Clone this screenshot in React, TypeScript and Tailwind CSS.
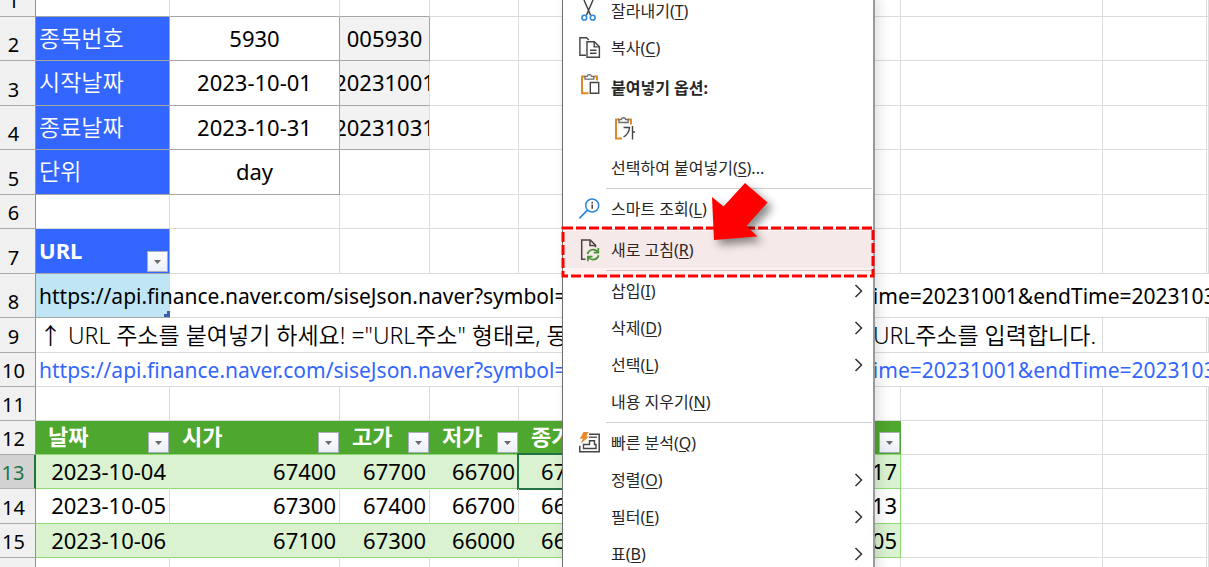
import type { ReactNode } from 'react'
import clsx from 'clsx'

const API_URL =
  'https://api.finance.naver.com/siseJson.naver?symbol=005930&requestType=1&startTime=20231001&endTime=20231031&timeframe=day'

const CONDITIONS = [
  { row: 2, label: '종목번호', value: '5930', code: '005930', height: 'h-11' },
  { row: 3, label: '시작날짜', value: '2023-10-01', code: '20231001', height: 'h-[45px]' },
  { row: 4, label: '종료날짜', value: '2023-10-31', code: '20231031', height: 'h-11' },
  { row: 5, label: '단위', value: 'day', code: '', height: 'h-[45px]' },
]

const COLUMNS = ['날짜', '시가', '고가', '저가', '종가', '거래량', '소진율']

const PRICES = [
  { row: 13, height: 'h-[34px]', values: ['2023-10-04', '67400', '67700', '66700', '67500', '17123847', '53.17'] },
  { row: 14, height: 'h-[35px]', values: ['2023-10-05', '67300', '67400', '66700', '66700', '11743288', '53.13'] },
  { row: 15, height: 'h-[34px]', values: ['2023-10-06', '67100', '67300', '66000', '66000', '13394815', '53.05'] },
]

const CutIcon = () => (
  <svg width="22" height="24" viewBox="0 0 22 24" fill="none">
    <path d="M5 1l6.600 15.200M14 1L7.400 16.200" stroke="#444" strokeWidth="1.5" />
    <circle cx="5.300" cy="18.700" r="2.400" stroke="#2b88d8" strokeWidth="1.5" />
    <circle cx="13.700" cy="18.700" r="2.400" stroke="#2b88d8" strokeWidth="1.5" />
  </svg>
)

const CopyIcon = () => (
  <svg width="22" height="24" viewBox="0 0 22 24" fill="none" stroke="#444" strokeWidth="1.4">
    <path d="M7 19.300H.9V1.700h6.600l2.400 2.200" fill="#fafafa" />
    <path d="M8 5.700h7.400l5 5v10.600H8z" fill="#fff" />
    <path d="M15.200 5.900v5h5M11 14.200h6.500M11 17.200h6.500" />
  </svg>
)

const PasteIcon = () => (
  <svg width="22" height="24" viewBox="0 0 22 24" fill="none">
    <path d="M9.500 21.200H3V4.400h3M15 4.400h3v4" stroke="#e08a27" strokeWidth="2" />
    <path d="M6 7.200V4.400h2.200a2.200 2.200 0 0 1 4.300 0h2.200v2.800z" stroke="#6b6b6b" strokeWidth="1.3" fill="#fff" />
    <path d="M11.300 10.500h8.400v10.700h-8.400z" stroke="#444" strokeWidth="1.4" fill="#fff" />
  </svg>
)

const PasteTextIcon = () => (
  <svg width="24" height="26" viewBox="0 0 24 26" fill="none">
    <path d="M11 23.500H5V4.500h3M17 4.500h3v5" stroke="#e08a27" strokeWidth="2" />
    <path d="M8 7.500V4.500h2.400a2.200 2.200 0 0 1 4.300 0h2.400v3z" stroke="#6b6b6b" strokeWidth="1.3" fill="#fff" />
    <path d="M12.500 12.500h6c-.3 4.500-2.500 7.500-6 9.500M21.500 11v13.500M21.500 17h2.500" stroke="#444" strokeWidth="1.4" />
  </svg>
)

const LookupIcon = () => (
  <svg width="22" height="24" viewBox="0 0 22 24" fill="none">
    <circle cx="13.200" cy="8.500" r="6.500" stroke="#2b88d8" strokeWidth="1.500" fill="#fff" />
    <path d="M8.500 13.200L.3 21.400" stroke="#2b88d8" strokeWidth="1.700" />
    <path d="M13.200 7.600v4.200M13.200 4.800v1.600" stroke="#444" strokeWidth="1.500" />
  </svg>
)

const RefreshIcon = () => (
  <svg width="22" height="24" viewBox="0 0 22 24" fill="none">
    <path d="M6.500 21.300H2.700V2h8.600l5.200 5.200v2" stroke="#444" strokeWidth="1.500" />
    <path d="M11 2.200v5.400h5.400" stroke="#444" strokeWidth="1.500" />
    <path
      d="M8.600 16c1-4.500 6.500-6 10-2.300M19.300 10v4.600h-4.600M19.600 17.200c-1 4.500-6.500 6-10 2.300M8.900 23.200v-4.600h4.600"
      stroke="#3f9b3c"
      strokeWidth="1.700"
    />
  </svg>
)

const AnalysisIcon = () => (
  <svg width="22" height="24" viewBox="0 0 22 24" fill="none">
    <path d="M10 3.200h10.200v17.600H.8v-6" stroke="#444" strokeWidth="1.500" />
    <path d="M10 6.200h8" stroke="#444" strokeWidth="1.300" />
    <path d="M4.500 17.500v-4h6V9.800h5v3.700H17v4z" stroke="#444" strokeWidth="1.400" />
    <path d="M4.500 1h5L7.200 5.500H10L1.500 13 4 7.700H.8z" fill="#e8892b" />
  </svg>
)

const ChevronIcon = () => (
  <svg width="9" height="14" viewBox="0 0 9 14" fill="none">
    <path d="M1.500 1l6 6-6 6" stroke="#333" strokeWidth="1.500" />
  </svg>
)

function RowHead({ n, active }: { n: number; active?: boolean }) {
  return (
    <th
      scope="row"
      className={clsx(
        'border-b p-0 pr-2 pb-[3px] align-bottom text-[20px] leading-6 font-normal',
        active
          ? 'border-r-2 border-r-[#217346] border-b-[#b5b5b5] bg-[#d2d2d2] text-[#217346]'
          : 'border-r border-r-[#919191] border-b-[#a9a9a9] bg-[#f0f0f0]'
      )}
    >
      {n}
    </th>
  )
}

function Blank({ count }: { count: number }) {
  return Array.from({ length: count }, (_, i) => <td key={i} className="border-r border-b border-[#dcdcdc] p-0" />)
}

function FilterButton({ name }: { name: string }) {
  return (
    <button
      aria-label={`${name} 필터`}
      className="absolute right-px bottom-px flex size-[21px] items-center justify-center border border-[#a8aec0] bg-linear-to-b from-white to-[#eceff7]"
    >
      <svg width="7" height="4" viewBox="0 0 7 4">
        <path d="M0 0h7L3.500 4z" fill="#6a6a6a" />
      </svg>
    </button>
  )
}

function Sheet() {
  return (
    <table className="w-full table-fixed border-separate border-spacing-0 text-[22px] leading-6 whitespace-nowrap text-black">
      <colgroup>
        <col className="w-9" />
        <col className="w-[134px]" />
        <col className="w-[170px]" />
        <col className="w-[90px]" />
        <col className="w-[89px]" />
        <col className="w-[89px]" />
        <col className="w-[133px]" />
        <col className="w-[160px]" />
        <col className="w-[202px]" />
        <col className="w-[104px]" />
        <col />
      </colgroup>
      <tbody>
        <tr className="h-[17px]">
          <th scope="row" className="border-r border-b border-r-[#919191] border-b-[#a9a9a9] bg-[#f0f0f0] p-0 pr-2 text-[20px] font-normal">
            <div className="flex h-4 items-end justify-center overflow-hidden pb-[3px]">1</div>
          </th>
          <td className="border-r border-b border-r-[#dcdcdc] border-b-[#a6a6a6]" />
          <td className="border-r border-b border-r-[#dcdcdc] border-b-[#a6a6a6]" />
          <td className="border-r border-b border-r-[#dcdcdc] border-b-[#a6a6a6]" />
          <Blank count={7} />
        </tr>
        {CONDITIONS.map(c => (
          <tr key={c.row} className={c.height}>
            <RowHead n={c.row} />
            <td className="border-r border-b border-[#a6a6a6] bg-[#3366ff] p-0 pb-0.5 pl-[3px] text-[23px] font-[350] text-white">
              {c.label}
            </td>
            <td className="border-r border-b border-[#a6a6a6] p-0 pb-0.5 text-center">{c.value}</td>
            <td
              className={clsx(
                'border-r border-b p-0 pb-0.5',
                c.code ? 'border-b-[#a6a6a6] bg-[#f2f2f2]' : 'border-b-[#dcdcdc]',
                c.row === 2 ? 'border-r-[#a6a6a6]' : 'border-r-[#dcdcdc]'
              )}
            >
              <div className="flex justify-center overflow-hidden">{c.code}</div>
            </td>
            <Blank count={7} />
          </tr>
        ))}
        <tr className="h-[34px]">
          <RowHead n={6} />
          <Blank count={10} />
        </tr>
        <tr className="h-[45px]">
          <RowHead n={7} />
          <td className="relative border-r border-b border-[#a6a6a6] bg-[#3366ff] p-0 pb-0.5 pl-[3px] font-bold text-white">
            URL
            <FilterButton name="URL" />
          </td>
          <Blank count={9} />
        </tr>
        <tr className="h-11">
          <RowHead n={8} />
          <td className="relative border-b border-[#a6a6a6] bg-[#c0e6f5] p-0 pl-[3px]">
            <svg className="absolute right-0 bottom-0" width="6" height="6" viewBox="0 0 6 6">
              <path d="M6 0v6H0V3h3V0z" fill="#3a5fae" />
            </svg>
            <div className="relative w-0 text-[21px]">{API_URL}</div>
          </td>
          <td colSpan={9} className="border-b border-[#dcdcdc] p-0" />
        </tr>
        <tr className="h-[35px]">
          <RowHead n={9} />
          <td colSpan={8} className="border-r border-b border-[#dcdcdc] p-0 pr-1.5 pl-[3px] text-[23px] font-[350]">
            <div className="flex justify-between">
              <span>↑ URL 주소를 붙여넣기 하세요! ="URL주소" 형태로, 동</span>
              <span>URL주소를 입력합니다.</span>
            </div>
          </td>
          <Blank count={2} />
        </tr>
        <tr className="h-[34px]">
          <RowHead n={10} />
          <td colSpan={10} className="border-b border-[#dcdcdc] p-0 pl-[3px]">
            <div className="w-0 text-[21px] text-[#3366ff]">{API_URL}</div>
          </td>
        </tr>
        <tr className="h-[34px]">
          <RowHead n={11} />
          <Blank count={10} />
        </tr>
        <tr className="h-[34px]">
          <RowHead n={12} />
          {COLUMNS.map(name => (
            <th key={name} scope="col" className="relative border-b border-[#8ed973] bg-[#4ea72e] p-0 pb-[3px] pl-3 text-left font-bold text-white">
              {name}
              <FilterButton name={name} />
            </th>
          ))}
          <Blank count={3} />
        </tr>
        {PRICES.map(p => {
          const banded = p.row !== 14
          return (
            <tr key={p.row} className={p.height}>
              <RowHead n={p.row} active={p.row === 13} />
              {p.values.map((v, i) => (
                <td
                  key={i}
                  className={clsx(
                    'relative border-r border-b border-b-[#8ed973] p-0 pr-[3px] pb-0.5 text-right',
                    banded && 'bg-[#daf2d0]',
                    i === 6 ? 'border-r-[#8ed973]' : banded ? 'border-r-[#daf2d0]' : 'border-r-[#dcdcdc]'
                  )}
                >
                  {v}
                  {p.row === 13 && i === 4 && <div className="absolute -inset-0.5 border-2 border-[#217346]" />}
                </td>
              ))}
              <Blank count={3} />
            </tr>
          )
        })}
        <tr className="h-[34px]">
          <RowHead n={16} />
          <Blank count={10} />
        </tr>
      </tbody>
    </table>
  )
}

interface MenuItemProps {
  label: string
  hotkey: string
  icon?: ReactNode
  suffix?: string
  submenu?: boolean
  active?: boolean
}

function MenuItem({ label, hotkey, icon, suffix, submenu, active }: MenuItemProps) {
  return (
    <button role="menuitem" className={clsx('flex h-[37px] w-full items-center pr-[10px] pl-4', active && 'bg-[#f5f5f5]')}>
      <span className="w-8">{icon}</span>
      <span>
        {label}(<u className="underline-offset-2">{hotkey}</u>){suffix}
      </span>
      {submenu && (
        <span className="ml-auto">
          <ChevronIcon />
        </span>
      )}
    </button>
  )
}

const Separator = () => <hr className="mt-0.5 mr-px mb-px ml-[43px] border-[#d0d0d0]" />

function ContextMenu() {
  return (
    <div
      role="menu"
      className="absolute -top-2 left-[562px] w-[313px] border-r-2 border-l border-r-[#9a9a9a] border-l-[#6f6f6f] bg-white text-[16px] leading-6 text-[#262626] shadow-[4px_4px_12px_rgba(0,0,0,0.12)]"
    >
      <MenuItem label="잘라내기" hotkey="T" icon={<CutIcon />} />
      <MenuItem label="복사" hotkey="C" icon={<CopyIcon />} />
      <div className="flex h-11 items-center pl-4 font-bold">
        <span className="w-8 pb-2">
          <PasteIcon />
        </span>
        붙여넣기 옵션:
      </div>
      <div className="flex h-[39px] items-center pb-1 pl-12">
        <button role="menuitem" aria-label="텍스트만 유지">
          <PasteTextIcon />
        </button>
      </div>
      <MenuItem label="선택하여 붙여넣기" hotkey="S" suffix="..." />
      <Separator />
      <MenuItem label="스마트 조회" hotkey="L" icon={<LookupIcon />} />
      <Separator />
      <div className="relative">
        <MenuItem label="새로 고침" hotkey="R" icon={<RefreshIcon />} active />
        <div className="absolute inset-x-0 -top-[3px] -bottom-2 bg-[#ff0000]/5">
          <svg width="100%" height="100%" className="block overflow-visible">
            <rect width="100%" height="100%" fill="none" stroke="#f00" strokeWidth="3" strokeDasharray="10 3" />
          </svg>
        </div>
      </div>
      <Separator />
      <MenuItem label="삽입" hotkey="I" submenu />
      <MenuItem label="삭제" hotkey="D" submenu />
      <MenuItem label="선택" hotkey="L" submenu />
      <MenuItem label="내용 지우기" hotkey="N" />
      <Separator />
      <MenuItem label="빠른 분석" hotkey="Q" icon={<AnalysisIcon />} />
      <MenuItem label="정렬" hotkey="O" submenu />
      <MenuItem label="필터" hotkey="E" submenu />
      <MenuItem label="표" hotkey="B" submenu />
    </div>
  )
}

// red pointer aimed at the refresh command
const PointerArrow = () => (
  <svg
    className="absolute top-[182px] left-[711px] drop-shadow-[5px_5px_4px_rgba(0,0,0,0.45)]"
    width="58"
    height="60"
    viewBox="0 0 58 60"
  >
    <path d="M3 58L1 15l11.500 9.500L34 1l22.500 19.500L35.500 44 46.500 54.500z" fill="#f00" />
  </svg>
)

export default function App() {
  return (
    <main className="relative h-screen overflow-hidden bg-white font-['Noto_Sans','Noto_Sans_CJK_KR',sans-serif]">
      <Sheet />
      <ContextMenu />
      <PointerArrow />
    </main>
  )
}
